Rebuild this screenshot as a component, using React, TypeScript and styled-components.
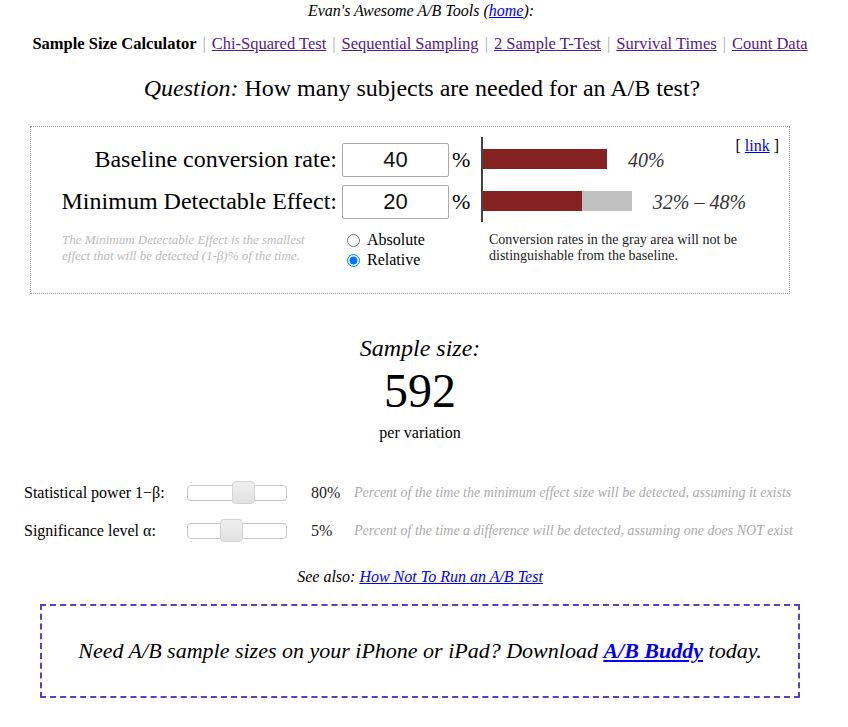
import React from "react";
import styled, { createGlobalStyle } from "styled-components";

const Global = createGlobalStyle`
  html, body { margin: 0; padding: 0; background: #fff; }
  body { font-family: "Liberation Serif", "Times New Roman", serif; color: #000; }
`;

const Page = styled.div`
  width: 848px;
  padding-top: 2px;
`;

const Header = styled.div`
  text-align: center;
  font-style: italic;
  font-size: 16px;
  line-height: 17px;
  margin-left: -6px;
`;

const Link = styled.a<{ $visited?: boolean }>`
  color: ${(p) => (p.$visited ? "#551A8B" : "#0000EE")};
  text-decoration: underline;
`;

const Nav = styled.div`
  margin-top: 16px;
  text-align: center;
  font-size: 16.5px;
  line-height: 18px;
  margin-left: -8px;
`;

const Current = styled.b``;

const Sep = styled.span`
  color: #aaa;
  margin: 0 6px;
`;

const Question = styled.div`
  margin-top: 21px;
  text-align: center;
  font-size: 24px;
  line-height: 28px;
  margin-left: -4px;
`;

const Em = styled.i``;

const Box = styled.div`
  margin: 24px 0 0 30px;
  width: 758px;
  height: 156px;
  border: 1px dotted #999;
  display: flex;
  padding-top: 10px;
  box-sizing: content-box;
`;

const Left = styled.div`
  width: 450px;
  display: grid;
  grid-template-columns: 311px 107px 32px;
  grid-auto-rows: min-content;
`;

const Label = styled.div`
  font-size: 24px;
  text-align: right;
  padding-right: 5px;
  height: 42px;
  line-height: 44px;
`;

const InputCell = styled.div`
  height: 42px;
  display: flex;
  align-items: center;
  padding-top: 4px;
  box-sizing: border-box;
`;

const NumInput = styled.input`
  width: 107px;
  height: 34px;
  box-sizing: border-box;
  border: 1px solid #aaa;
  border-radius: 2px;
  font-family: "Liberation Sans", Arial, sans-serif;
  font-size: 22px;
  text-align: center;
  padding: 0;
  margin: 0;
  color: #111;
`;

const Pct = styled.div`
  font-size: 22px;
  height: 42px;
  line-height: 46px;
  padding-left: 3px;
`;

const Note = styled.div`
  grid-column: 1;
  padding: 11px 10px 0 31px;
  font-size: 13px;
  line-height: 16px;
  font-style: italic;
  color: #bbb;
`;

const Radios = styled.div`
  grid-column: 2 / 4;
  padding-top: 9px;
  padding-left: 5px;
  font-size: 16px;
  line-height: 20px;
`;

const RadioLabel = styled.label`
  display: flex;
  align-items: center;
  gap: 7px;
`;

const Radio = styled.input`
  margin: 0;
  width: 13px;
  height: 13px;
`;

const Right = styled.div`
  flex: 1;
  display: flex;
  flex-direction: column;
  position: relative;
`;

const Chart = styled.div`
  border-left: 2px solid #444;
  height: 85px;
  box-sizing: border-box;
  padding-top: 12px;
  display: flex;
  flex-direction: column;
  gap: 22px;
`;

const BarRow = styled.div`
  display: flex;
  align-items: center;
  height: 20px;
`;

const Bar = styled.div<{ $color: string }>`
  height: 20px;
  background: ${(p) => p.$color};
`;

const BarLabel = styled.span`
  font-style: italic;
  font-size: 20px;
  color: #333;
  margin-left: 21px;
  padding-top: 3px;
  white-space: nowrap;
`;

const GrayNote = styled.div`
  margin-top: 10px;
  padding-left: 8px;
  font-size: 14px;
  line-height: 16px;
  color: #222;
`;

const LinkTag = styled.div`
  position: absolute;
  right: 10px;
  top: 0px;
  font-size: 16px;
`;

const Result = styled.div`
  margin-top: 40px;
  text-align: center;
  margin-left: -8px;
`;

const ResultTitle = styled.div`
  font-style: italic;
  font-size: 24px;
  line-height: 28px;
  margin-bottom: 2px;
`;

const ResultNum = styled.div`
  font-size: 48px;
  line-height: 54px;
`;

const ResultSub = styled.div`
  margin-top: 6px;
  font-size: 16px;
  line-height: 18px;
`;

const Params = styled.div`
  margin-top: 40px;
  padding-left: 24px;
  display: flex;
  flex-direction: column;
  gap: 16px;
`;

const ParamRow = styled.div`
  display: flex;
  align-items: center;
  height: 22px;
`;

const ParamLabel = styled.div`
  width: 163px;
  font-size: 16px;
`;

const Track = styled.div`
  position: relative;
  width: 100px;
  height: 16px;
  box-sizing: border-box;
  border: 1px solid #c8c8c8;
  border-radius: 4px;
  background: #fff;
`;

const Thumb = styled.div`
  position: absolute;
  top: -5px;
  width: 23px;
  height: 23px;
  box-sizing: border-box;
  border: 1px solid #d3d3d3;
  border-radius: 4px;
  background: linear-gradient(#eeeeee, #e2e2e2);
`;

const ParamValue = styled.div`
  width: 67px;
  box-sizing: border-box;
  padding-left: 24px;
  font-size: 16px;
  color: #222;
`;

const ParamDesc = styled.div`
  font-size: 14px;
  font-style: italic;
  color: #aaa;
  white-space: nowrap;
`;

const SeeAlso = styled.div`
  margin-top: 26px;
  text-align: center;
  font-style: italic;
  font-size: 16px;
  line-height: 18px;
  margin-left: -8px;
`;

const Promo = styled.div`
  margin: 18px 0 0 40px;
  width: 760px;
  height: 94px;
  box-sizing: border-box;
  border: 2px dashed #5a3fc0;
  display: flex;
  align-items: center;
  justify-content: center;
  font-style: italic;
  font-size: 22px;
`;

const Buddy = styled.a`
  color: #0000EE;
  font-weight: bold;
  text-decoration: underline;
`;

const SCALE = 3.1;

function Slider({ pos }: { pos: number }) {
  return (
    <Track>
      <Thumb style={{ left: pos }} />
    </Track>
  );
}

export default function App() {
  return (
    <Page>
      <Global />
      <Header>
        Evan's Awesome A/B Tools (<Link href="#">home</Link>):
      </Header>
      <Nav>
        <Current>Sample Size Calculator</Current>
        <Sep>|</Sep>
        <Link $visited href="#">Chi-Squared Test</Link>
        <Sep>|</Sep>
        <Link $visited href="#">Sequential Sampling</Link>
        <Sep>|</Sep>
        <Link $visited href="#">2 Sample T-Test</Link>
        <Sep>|</Sep>
        <Link $visited href="#">Survival Times</Link>
        <Sep>|</Sep>
        <Link $visited href="#">Count Data</Link>
      </Nav>
      <Question>
        <Em>Question:</Em> How many subjects are needed for an A/B test?
      </Question>
      <Box>
        <Left>
          <Label>Baseline conversion rate:</Label>
          <InputCell>
            <NumInput defaultValue="40" />
          </InputCell>
          <Pct>%</Pct>
          <Label>Minimum Detectable Effect:</Label>
          <InputCell>
            <NumInput defaultValue="20" />
          </InputCell>
          <Pct>%</Pct>
          <Note>
            The Minimum Detectable Effect is the smallest effect that will be
            detected (1-β)% of the time.
          </Note>
          <Radios>
            <RadioLabel>
              <Radio type="radio" name="mde" /> Absolute
            </RadioLabel>
            <RadioLabel>
              <Radio type="radio" name="mde" defaultChecked /> Relative
            </RadioLabel>
          </Radios>
        </Left>
        <Right>
          <Chart>
            <BarRow>
              <Bar $color="#862222" style={{ width: 40 * SCALE }} />
              <BarLabel>40%</BarLabel>
            </BarRow>
            <BarRow>
              <Bar $color="#862222" style={{ width: 32 * SCALE }} />
              <Bar $color="#c0c0c0" style={{ width: 16 * SCALE }} />
              <BarLabel>32% – 48%</BarLabel>
            </BarRow>
          </Chart>
          <GrayNote>
            Conversion rates in the gray area will not be
            <br />
            distinguishable from the baseline.
          </GrayNote>
          <LinkTag>
            [ <Link href="#">link</Link> ]
          </LinkTag>
        </Right>
      </Box>
      <Result>
        <ResultTitle>Sample size:</ResultTitle>
        <ResultNum>592</ResultNum>
        <ResultSub>per variation</ResultSub>
      </Result>
      <Params>
        <ParamRow>
          <ParamLabel>Statistical power 1−β:</ParamLabel>
          <Slider pos={44} />
          <ParamValue>80%</ParamValue>
          <ParamDesc>
            Percent of the time the minimum effect size will be detected,
            assuming it exists
          </ParamDesc>
        </ParamRow>
        <ParamRow>
          <ParamLabel>Significance level α:</ParamLabel>
          <Slider pos={32} />
          <ParamValue>5%</ParamValue>
          <ParamDesc>
            Percent of the time a difference will be detected, assuming one
            does NOT exist
          </ParamDesc>
        </ParamRow>
      </Params>
      <SeeAlso>
        See also: <Link href="#">How Not To Run an A/B Test</Link>
      </SeeAlso>
      <Promo>
        <span>
          Need A/B sample sizes on your iPhone or iPad? Download{" "}
          <Buddy href="#">A/B Buddy</Buddy> today.
        </span>
      </Promo>
    </Page>
  );
}
